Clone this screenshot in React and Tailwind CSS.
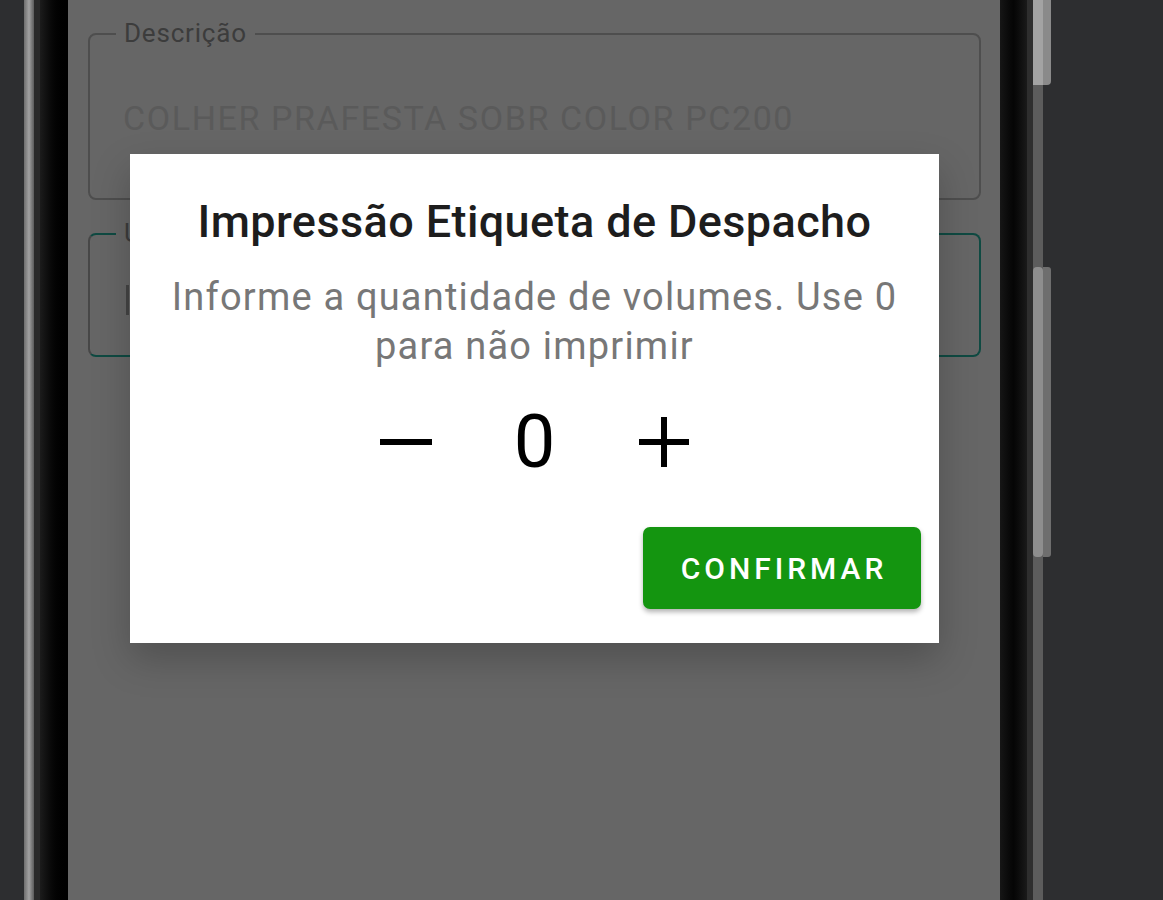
import React, { useState } from 'react';

function MinusIcon() {
  return (
    <svg width="54" height="54" viewBox="0 0 54 54" fill="none">
      <rect x="1" y="24" width="52" height="6" fill="#000" />
    </svg>
  );
}

function PlusIcon() {
  return (
    <svg width="54" height="54" viewBox="0 0 54 54" fill="none">
      <rect x="2" y="24" width="50" height="6" fill="#000" />
      <rect x="24" y="2" width="6" height="50" fill="#000" />
    </svg>
  );
}

function OutlinedField({ label, value, focused, className }) {
  return (
    <div
      className={
        "relative rounded-lg border-2 " +
        (focused ? "border-[#0f4a42] border-l-[#474747] " : "border-[#4e4e4e] ") +
        className
      }
    >
      <span className="absolute -top-[18px] left-[26px] bg-[#666666] px-[8px] text-[26px] leading-[32px] tracking-[0.8px] text-[#3c3c3c]">
        {label}
      </span>
      {value}
    </div>
  );
}

export default function App() {
  const [volumes, setVolumes] = useState(0);

  return (
    <div className="flex h-[900px] w-full overflow-hidden bg-[#2d2e30] font-['Roboto',sans-serif]">
      {/* left edge of the device */}
      <div className="w-[24px] shrink-0" />
      <div className="w-[10px] shrink-0 bg-gradient-to-r from-[#6e6e6e] via-[#a2a2a2] to-[#5c5c5c]" />
      <div className="w-[6px] shrink-0 bg-[#2a2a2a]" />
      <div className="w-[28px] shrink-0 bg-gradient-to-r from-[#1c1c1c] to-[#000000]" />

      {/* screen */}
      <div className="relative w-[932px] shrink-0 bg-[#666666]">
        <div className="flex flex-col gap-[33px] pl-[20px] pr-[19px] pt-[33px]">
          <OutlinedField
            label="Descrição"
            className="h-[167px]"
            value={
              <div className="pl-[33px] pt-[63px] text-[34px] leading-[40px] tracking-[1.6px] text-[#5a5a5a]">
                COLHER PRAFESTA SOBR COLOR PC200
              </div>
            }
          />
          <OutlinedField
            label="Unid."
            focused
            className="h-[124px]"
            value={<div className="ml-[36px] mt-[50px] h-[30px] w-[3px] bg-[#444444]" />}
          />
        </div>

        {/* dialog */}
        <div className="absolute left-[62px] top-[154px] flex h-[489px] w-[809px] flex-col items-center bg-white pt-[42px] shadow-[0_16px_36px_rgba(0,0,0,0.22)]">
          <h2 className="text-[45px] font-medium leading-[52px] tracking-[0.4px] text-[#1d1d1d]">
            Impressão Etiqueta de Despacho
          </h2>
          <p className="mt-[25px] w-[780px] text-center text-[38px] leading-[49px] tracking-[1.2px] text-[#777777]">
            Informe a quantidade de volumes. Use 0 para não imprimir
          </p>
          <div className="mt-[31px] flex h-[80px] items-center">
            <button
              className="flex w-[129px] justify-center"
              onClick={() => setVolumes((v) => Math.max(0, v - 1))}
            >
              <MinusIcon />
            </button>
            <span className="w-[129px] text-center text-[74px] font-normal leading-[80px] text-black">
              {volumes}
            </span>
            <button className="flex w-[129px] justify-center" onClick={() => setVolumes((v) => v + 1)}>
              <PlusIcon />
            </button>
          </div>
          <div className="mt-[45px] flex w-full justify-end pr-[18px]">
            <button className="h-[82px] w-[278px] rounded-[7px] bg-[#149510] pl-[4px] text-[30px] font-medium tracking-[4px] text-white shadow-[0_3px_5px_rgba(0,0,0,0.3)]">
              CONFIRMAR
            </button>
          </div>
        </div>
      </div>

      {/* right edge of the device */}
      <div className="w-[27px] shrink-0 bg-gradient-to-r from-[#161616] via-[#050505] to-[#1a1a1a]" />
      <div className="w-[6px] shrink-0 bg-[#2e2e2e]" />
      <div className="flex w-[10px] shrink-0 flex-col bg-[#5c5c5c]">
        <div className="h-[85px] bg-[#a3a3a3]" />
        <div className="mt-[182px] h-[290px] rounded-sm bg-[#8e8e8e]" />
      </div>
      <div className="flex w-[8px] shrink-0 flex-col">
        <div className="h-[85px] rounded-br-[4px] bg-[#8a8a8a]" />
        <div className="mt-[182px] h-[290px] rounded-r-[3px] bg-[#6e6e6e]" />
      </div>
      <div className="flex-1" />
    </div>
  );
}
